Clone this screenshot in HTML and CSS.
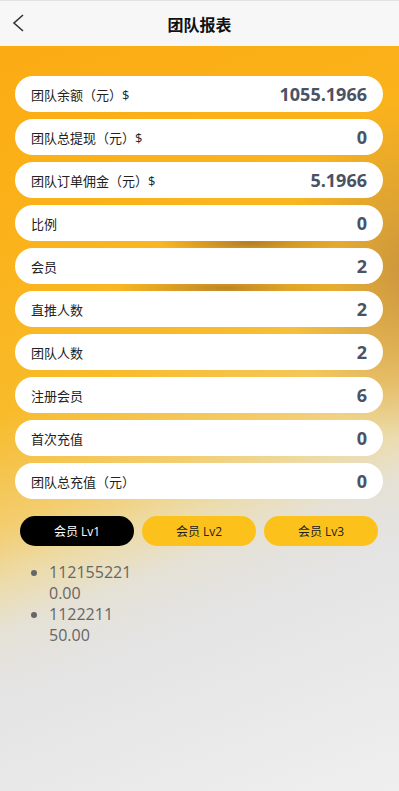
FILE: index.html
```html
<!DOCTYPE html>
<html lang="zh-CN">
<head>
    <meta charset="UTF-8">
    <meta name="viewport" content="width=device-width, initial-scale=1.0">
    <title>团队报表</title>
    <link rel="stylesheet" href="styles.css">
</head>
<body>
    <div class="page">
        <header class="nav-bar">
            <a class="back" href="#">
                <svg width="14" height="20" viewBox="0 0 14 20">
                    <polyline points="11,2 2,10 11,18" fill="none" stroke="#333" stroke-width="1.6"/>
                </svg>
            </a>
            <h1>团队报表</h1>
        </header>

        <div class="stats">
            <div class="stat-row"><span class="label">团队余额（元）$</span><span class="value">1055.1966</span></div>
            <div class="stat-row"><span class="label">团队总提现（元）$</span><span class="value">0</span></div>
            <div class="stat-row"><span class="label">团队订单佣金（元）$</span><span class="value">5.1966</span></div>
            <div class="stat-row"><span class="label">比例</span><span class="value">0</span></div>
            <div class="stat-row"><span class="label">会员</span><span class="value">2</span></div>
            <div class="stat-row"><span class="label">直推人数</span><span class="value">2</span></div>
            <div class="stat-row"><span class="label">团队人数</span><span class="value">2</span></div>
            <div class="stat-row"><span class="label">注册会员</span><span class="value">6</span></div>
            <div class="stat-row"><span class="label">首次充值</span><span class="value">0</span></div>
            <div class="stat-row"><span class="label">团队总充值（元）</span><span class="value">0</span></div>
        </div>

        <div class="tabs">
            <button class="tab active">会员 Lv1</button>
            <button class="tab">会员 Lv2</button>
            <button class="tab">会员 Lv3</button>
        </div>

        <ul class="members">
            <li>112155221<br>0.00</li>
            <li>1122211<br>50.00</li>
        </ul>
    </div>
</body>
</html>
```

FILE: styles.css
```css
/* Reset */
* {
    margin: 0;
    padding: 0;
    box-sizing: border-box;
}
html, body {
    height: 100%;
}
body {
    font-family: "Open Sans", "Noto Sans CJK SC", sans-serif;
    color: #222;
    background: #efefef;
}
.page {
    min-height: 100vh;
    background:
        radial-gradient(ellipse 90px 14px at 250px 243px, rgba(150, 100, 40, 0.7), rgba(150, 100, 40, 0)),
        radial-gradient(ellipse 110px 14px at 225px 288px, rgba(150, 100, 40, 0.6), rgba(150, 100, 40, 0)),
        radial-gradient(ellipse 120px 170px at 405px 270px, rgba(185, 135, 70, 0.7), rgba(185, 135, 70, 0)),
        linear-gradient(159deg, #fbaa12 0%, #fbb21a 25%, #f8bb2a 44%, #f3cd70 56%, #ecdcac 62%, #e5e1d6 67%, #e4e4e4 74%, #efefef 100%);
}
.nav-bar {
    height: 46px;
    background: #f7f7f7;
    border-top: 1px solid #e2e2e2;
    display: flex;
    align-items: center;
    justify-content: center;
    position: relative;
}
.nav-bar h1 {
    font-size: 16px;
    font-weight: bold;
    color: #111;
}
.back {
    position: absolute;
    left: 12px;
    top: 12px;
    display: flex;
}
.stats {
    padding: 30px 16px 0 15px;
    display: flex;
    flex-direction: column;
    gap: 7px;
}
.stat-row {
    height: 36px;
    background: #fff;
    border-radius: 18px;
    display: flex;
    align-items: center;
    justify-content: space-between;
    padding: 0 16px;
}
.label {
    font-size: 13px;
    color: #222;
}
.value {
    font-size: 18px;
    font-weight: bold;
    color: #4a5263;
}
.tabs {
    display: flex;
    gap: 8px;
    padding: 17px 21px 0 20px;
}
.tab {
    flex: 1;
    height: 30px;
    border: none;
    border-radius: 15px;
    background: #fcc21b;
    color: #222;
    font-family: "Open Sans", "Noto Sans CJK SC", sans-serif;
    font-size: 12px;
}
.tab.active {
    background: #000;
    color: #fff;
}
.members {
    padding: 16px 0 0 49px;
    color: #666;
    font-size: 16px;
    line-height: 21px;
}
```
